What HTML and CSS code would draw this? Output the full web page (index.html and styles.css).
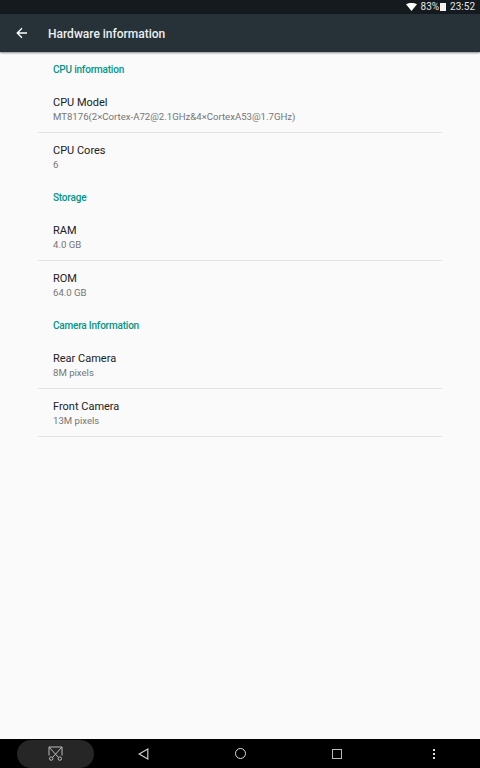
FILE: index.html
```html
<!DOCTYPE html>
<html lang="en">
<head>
  <meta charset="UTF-8">
  <meta name="viewport" content="width=device-width, initial-scale=1.0">
  <title>Hardware information</title>
  <link rel="stylesheet" href="styles.css">
</head>
<body>
<div class="screen">
  <!--Status bar-->
  <div class="status-bar">
    <svg class="wifi" width="11" height="8" viewBox="0 0 11 8"><path d="M0 1.2C3 -.4 8 -.4 11 1.2L5.5 8Z" fill="#fff"/></svg>
    <span class="battery-text">83%</span>
    <span class="battery"></span>
    <span class="clock">23:52</span>
  </div>

  <!--Toolbar-->
  <div class="toolbar">
    <svg class="back" width="12" height="12" viewBox="0 0 12 12"><path d="M11 6H1.5M6 1.2L1.2 6L6 10.8" fill="none" stroke="#fff" stroke-width="1.3"/></svg>
    <span class="toolbar-title">Hardware information</span>
  </div>

  <div class="content">
    <div class="section-title">CPU information</div>
    <div class="item">
      <div class="item-title">CPU Model</div>
      <div class="item-sub">MT8176(2×Cortex-A72@2.1GHz&amp;4×CortexA53@1.7GHz)</div>
    </div>
    <div class="item no-line">
      <div class="item-title">CPU Cores</div>
      <div class="item-sub">6</div>
    </div>

    <div class="section-title">Storage</div>
    <div class="item">
      <div class="item-title">RAM</div>
      <div class="item-sub">4.0 GB</div>
    </div>
    <div class="item no-line">
      <div class="item-title">ROM</div>
      <div class="item-sub">64.0 GB</div>
    </div>

    <div class="section-title">Camera Information</div>
    <div class="item">
      <div class="item-title">Rear Camera</div>
      <div class="item-sub">8M pixels</div>
    </div>
    <div class="item">
      <div class="item-title">Front Camera</div>
      <div class="item-sub">13M pixels</div>
    </div>
  </div>

  <!--Nav bar-->
  <div class="nav-bar">
    <div class="shot-pill">
      <svg width="15" height="15" viewBox="0 0 15 15" fill="none" stroke="#bbb" stroke-width="1"><path d="M1 9.5V1H14V9.5M1 1L10.5 11.5M14 1L4.5 11.5"/><circle cx="3.2" cy="12.6" r="1.7"/><circle cx="11.8" cy="12.6" r="1.7"/></svg>
    </div>
    <svg class="nav-back" width="11" height="12" viewBox="0 0 11 12"><path d="M9.8 1L1.2 6L9.8 11Z" fill="none" stroke="#ccc" stroke-width="1.2"/></svg>
    <span class="nav-home"></span>
    <span class="nav-recent"></span>
    <span class="nav-menu"><i></i><i></i><i></i></span>
  </div>
</div>
</body>
</html>
```

FILE: styles.css
```css
html, body {
  margin: 0;
  padding: 0;
}

.screen {
  width: 480px;
  height: 768px;
  display: flex;
  flex-direction: column;
  background: #fafafa;
  font-family: Roboto, sans-serif;
  overflow: hidden;
}

.status-bar {
  height: 14px;
  flex: none;
  background: #141a1d;
  color: #e4e6e7;
  font-size: 10px;
  line-height: 14px;
  display: flex;
  align-items: center;
  justify-content: flex-end;
  padding-right: 5px;
}

.wifi {
  margin-right: 4px;
}

.battery {
  width: 6px;
  height: 8px;
  margin: 0 4px 0 1px;
  background: #f2f2f2;
}

.toolbar {
  height: 38px;
  flex: none;
  background: #263238;
  color: #fff;
  display: flex;
  align-items: center;
  padding-left: 16px;
  box-shadow: 0 1px 2px rgba(0, 0, 0, 0.45);
  position: relative;
}

.toolbar-title {
  margin: 2px 0 0 20px;
  font-size: 12px;
  font-weight: 500;
  color: #eceff1;
}

.content {
  flex: 1;
  width: 404px;
  margin-left: 38px;
  padding-top: 1px;
}

.section-title {
  height: 32px;
  line-height: 34px;
  padding-left: 15px;
  font-size: 10px;
  font-weight: 500;
  letter-spacing: -0.2px;
  color: #009688;
}

.item {
  height: 48px;
  box-sizing: border-box;
  padding: 10px 0 0 15px;
  border-bottom: 1px solid #e3e3e3;
}

.no-line {
  border-bottom: none;
}

.item-title {
  font-size: 11px;
  line-height: 15px;
  color: #212121;
}

.item-sub {
  font-size: 9.6px;
  line-height: 13px;
  color: #757575;
}

.nav-bar {
  height: 29px;
  flex: none;
  background: #000;
  display: flex;
  align-items: center;
}

.shot-pill {
  width: 77px;
  height: 28px;
  margin-left: 17px;
  border-radius: 14px;
  background: #262626;
  display: flex;
  align-items: center;
  justify-content: center;
}

.nav-back {
  margin-left: 44px;
}

.nav-home {
  width: 9px;
  height: 9px;
  margin-left: 86px;
  border: 1px solid #ddd;
  border-radius: 50%;
}

.nav-recent {
  width: 8px;
  height: 8px;
  margin-left: 86px;
  border: 1px solid #bbb;
}

.nav-menu {
  margin-left: 91px;
  display: flex;
  flex-direction: column;
  gap: 2px;
}

.nav-menu i {
  display: block;
  width: 2px;
  height: 2px;
  background: #ddd;
}
```
